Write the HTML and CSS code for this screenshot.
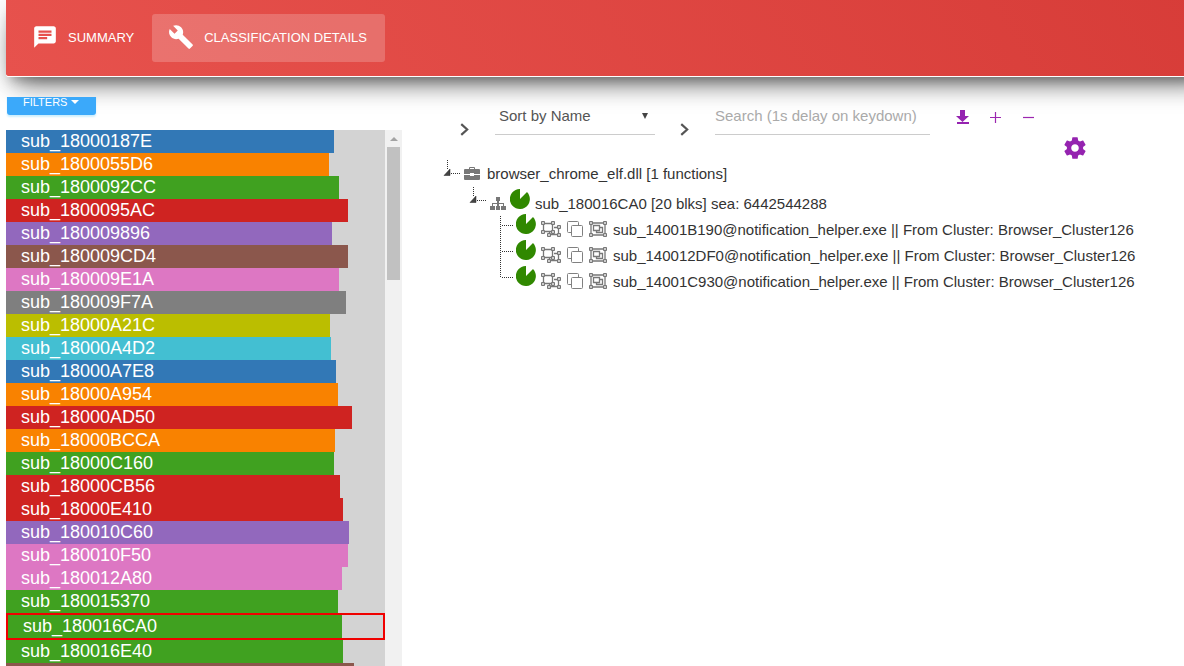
FILE: index.html
```html
<!DOCTYPE html>
<html lang="en">
<head>
<meta charset="utf-8">
<title>Classification Details</title>
<link rel="stylesheet" href="styles.css">
</head>
<body>
<svg class="defs" aria-hidden="true">
  <symbol id="pie" viewBox="0 0 20 20"><path fill="#308800" d="M10 10V0A10 10 0 1 0 17 3Z"/></symbol>
  <symbol id="ungroup" viewBox="0 0 20 16"><g fill="none" stroke="#777"><path stroke-width="1.300" d="M2.500 2.500h9v8h-9zM13 6.500h4.500v7h-9v-2.500"/><path fill="#ccc" d="M.5.5h3v3h-3zM10.500.5h3v3h-3zM.5 9.500h3v3h-3zM10.500 9.500h3v3h-3zM16.500 4.500h3v3h-3zM16.500 12.500h3v3h-3zM6.500 12.500h3v3h-3z"/></g></symbol>
  <symbol id="copy" viewBox="0 0 16 16"><g fill="#fff" stroke="#808080"><rect x=".5" y=".5" width="11" height="11" rx="1"/><rect x="4.500" y="4.500" width="11" height="11" rx="1"/></g></symbol>
  <symbol id="group" viewBox="0 0 18 16"><g fill="none" stroke="#777"><path stroke-width="1.300" d="M2 2h14v12H2z"/><path stroke-width="1.300" d="M4.500 4.500h6v5h-6zM11 6.500h2.500v5h-6v-2"/><path fill="#ccc" d="M.5.5h3v3h-3zM14.500.5h3v3h-3zM.5 12.500h3v3h-3zM14.500 12.500h3v3h-3z"/></g></symbol>
  <symbol id="chevron" viewBox="0 0 8 12"><path d="M1 1l5.500 5L1 11" fill="none" stroke="#555" stroke-width="2"/></symbol>
  <symbol id="expander" viewBox="0 0 18 28"><path d="M4.500 1v9M8 14.500h10" fill="none" stroke="#333" stroke-dasharray="1 1"/><path d="M1 16.500L7 10v6.500z" fill="#444" stroke="#222" stroke-width=".5"/></symbol>
</svg>

<header class="banner">
  <nav class="tabs">
    <a class="tab" href="#summary">
      <svg width="26" height="26" viewBox="0 0 24 24"><path fill="#fff" d="M20 2H4c-1.100 0-2 .9-2 2v18l4-4h14c1.100 0 2-.9 2-2V4c0-1.100-.9-2-2-2zM6 9h12v2H6V9zm8 5H6v-2h8v2zm4-6H6V6h12v2z"/></svg>
      SUMMARY
    </a>
    <a class="tab active" href="#details">
      <svg width="26" height="26" viewBox="0 0 24 24"><path fill="#fff" d="M22.700 19l-9.100-9.100c.9-2.300.4-5-1.500-6.900-2-2-5-2.400-7.400-1.300L9 6 6 9 1.600 4.700C.4 7.100.9 10.100 2.900 12.100c1.900 1.900 4.600 2.400 6.900 1.500l9.100 9.100c.4.4 1 .4 1.400 0l2.300-2.300c.5-.4.5-1.100.1-1.400z"/></svg>
      CLASSIFICATION DETAILS
    </a>
  </nav>
</header>

<main class="content">
  <aside class="sidebar">
    <div class="filter-bar"><button class="filters" type="button">FILTERS <span class="caret"></span></button></div>
    <div class="scroller">
      <ul class="functions">
        <li><div class="bar blue" style="width:86.5%">sub_18000187E</div></li>
        <li><div class="bar orange" style="width:85.2%">sub_1800055D6</div></li>
        <li><div class="bar green" style="width:87.9%">sub_1800092CC</div></li>
        <li><div class="bar red" style="width:90.2%">sub_1800095AC</div></li>
        <li><div class="bar purple" style="width:86%">sub_180009896</div></li>
        <li><div class="bar brown" style="width:90.2%">sub_180009CD4</div></li>
        <li><div class="bar pink" style="width:87.9%">sub_180009E1A</div></li>
        <li><div class="bar gray" style="width:89.7%">sub_180009F7A</div></li>
        <li><div class="bar olive" style="width:85.5%">sub_18000A21C</div></li>
        <li><div class="bar cyan" style="width:85.8%">sub_18000A4D2</div></li>
        <li><div class="bar blue" style="width:87.1%">sub_18000A7E8</div></li>
        <li><div class="bar orange" style="width:87.6%">sub_18000A954</div></li>
        <li><div class="bar red" style="width:91.3%">sub_18000AD50</div></li>
        <li><div class="bar orange" style="width:86.8%">sub_18000BCCA</div></li>
        <li><div class="bar green" style="width:86.5%">sub_18000C160</div></li>
        <li><div class="bar red" style="width:88.1%">sub_18000CB56</div></li>
        <li><div class="bar red" style="width:88.9%">sub_18000E410</div></li>
        <li><div class="bar purple" style="width:90.5%">sub_180010C60</div></li>
        <li><div class="bar pink" style="width:90.2%">sub_180010F50</div></li>
        <li><div class="bar pink" style="width:88.7%">sub_180012A80</div></li>
        <li><div class="bar green" style="width:87.6%">sub_180015370</div></li>
        <li class="selected"><div class="bar green" style="width:89.1%">sub_180016CA0</div></li>
        <li><div class="bar green" style="width:88.9%">sub_180016E40</div></li>
        <li><div class="bar brown" style="width:91.8%"></div></li>
      </ul>
      <div class="scrollbar"><span class="arrow"></span><span class="thumb"></span></div>
    </div>
  </aside>

  <section class="details">
    <div class="toolbar">
      <button class="step" type="button" aria-label="Expand sorting"><svg width="9" height="13"><use href="#chevron"/></svg></button>
      <div class="sort">
        <select aria-label="Sort"><option>Sort by Name</option></select>
        <span class="sort-arrow"></span>
      </div>
      <button class="step" type="button" aria-label="Expand search"><svg width="9" height="13"><use href="#chevron"/></svg></button>
      <input class="search" type="text" aria-label="Search" placeholder="Search (1s delay on keydown)">
      <div class="actions">
        <button type="button" aria-label="Download"><svg width="13" height="15" viewBox="0 0 13 15"><path fill="#9523b0" d="M4 0h5v6h4l-6.500 6L0 6h4zM1 12h12v2H1z"/></svg></button>
        <button type="button" aria-label="Expand all"><svg width="13" height="13" viewBox="0 0 13 13"><path stroke="#9c27b0" stroke-width="1.200" d="M1 6.500h11M6.500 1v11"/></svg></button>
        <button type="button" aria-label="Collapse all"><svg width="13" height="13" viewBox="0 0 13 13"><path stroke="#9c27b0" stroke-width="1.200" d="M1 6.500h11"/></svg></button>
      </div>
      <button class="settings" type="button" aria-label="Settings"><svg width="26" height="26" viewBox="0 0 24 24"><path fill="#9523b0" d="M19.430 12.980c.04-.32.07-.64.07-.98s-.03-.66-.07-.98l2.110-1.650c.19-.15.24-.42.12-.64l-2-3.460c-.12-.22-.39-.3-.61-.22l-2.490 1c-.52-.4-1.080-.73-1.690-.98l-.38-2.650C14.460 2.180 14.250 2 14 2h-4c-.25 0-.46.18-.49.42l-.38 2.650c-.61.25-1.170.59-1.690.98l-2.490-1c-.23-.09-.49 0-.61.22l-2 3.460c-.13.22-.07.49.12.64l2.110 1.650c-.04.32-.07.65-.07.98s.03.66.07.98l-2.110 1.650c-.19.15-.24.42-.12.64l2 3.460c.12.22.39.3.61.22l2.490-1c.52.4 1.080.73 1.690.98l.38 2.650c.03.24.24.42.49.42h4c.25 0 .46-.18.49-.42l.38-2.650c.61-.25 1.170-.59 1.690-.98l2.490 1c.23.09.49 0 .61-.22l2-3.460c.12-.22.07-.49-.12-.64l-2.110-1.650zM12 15.500c-1.930 0-3.500-1.570-3.500-3.500s1.570-3.500 3.500-3.500 3.500 1.570 3.500 3.500-1.570 3.500-3.500 3.500z"/></svg></button>
    </div>

    <ul class="tree">
      <li>
        <div class="node root">
          <svg width="18" height="28"><use href="#expander"/></svg>
          <svg class="case" width="16" height="13" viewBox="0 0 16 13"><path fill="#777" d="M5 2V1q0-1 1-1h4q1 0 1 1v1h4q1 0 1 1v4h-6V6H6v1H0V3q0-1 1-1zm1 0h4V1H6zM0 8h6v1h4V8h6v4q0 1-1 1H1q-1 0-1-1z"/></svg>
          <span>browser_chrome_elf.dll [1 functions]</span>
        </div>
        <ul>
          <li>
            <div class="node branch">
              <svg class="toggle" width="18" height="28"><use href="#expander"/></svg>
              <svg class="map" width="16" height="13" viewBox="0 0 16 13"><path fill="#777" d="M6 0h4v4H9v2h5v3h2v4h-5V9h2V7H9v2h1v4H6V9h1V7H3v2h2v4H0V9h2V6h5V4H6z"/></svg>
              <svg class="pie" width="20" height="20"><use href="#pie"/></svg>
              <span>sub_180016CA0 [20 blks] sea: 6442544288</span>
            </div>
            <ul>
              <li class="node leaf">
                <svg class="link" width="15" height="26"><path d="M1.500 0v26M3 9.500h12"/></svg>
                <svg class="pie" width="20" height="20"><use href="#pie"/></svg>
                <svg width="20" height="16"><use href="#ungroup"/></svg>
                <svg width="16" height="16"><use href="#copy"/></svg>
                <svg width="18" height="16"><use href="#group"/></svg>
                <span>sub_14001B190@notification_helper.exe || From Cluster: Browser_Cluster126</span>
              </li>
              <li class="node leaf">
                <svg class="link" width="15" height="26"><path d="M1.500 0v26M3 9.500h12"/></svg>
                <svg class="pie" width="20" height="20"><use href="#pie"/></svg>
                <svg width="20" height="16"><use href="#ungroup"/></svg>
                <svg width="16" height="16"><use href="#copy"/></svg>
                <svg width="18" height="16"><use href="#group"/></svg>
                <span>sub_140012DF0@notification_helper.exe || From Cluster: Browser_Cluster126</span>
              </li>
              <li class="node leaf">
                <svg class="link" width="15" height="26"><path d="M1.500 0v10M3 9.500h12"/></svg>
                <svg class="pie" width="20" height="20"><use href="#pie"/></svg>
                <svg width="20" height="16"><use href="#ungroup"/></svg>
                <svg width="16" height="16"><use href="#copy"/></svg>
                <svg width="18" height="16"><use href="#group"/></svg>
                <span>sub_14001C930@notification_helper.exe || From Cluster: Browser_Cluster126</span>
              </li>
            </ul>
          </li>
        </ul>
      </li>
    </ul>
  </section>
</main>
</body>
</html>
```
FILE: styles.css
```css
* { box-sizing: border-box; }

body {
  margin: 0;
  height: 100vh;
  display: flex;
  flex-direction: column;
  overflow: hidden;
  background: #fff;
  color: #333;
  font-family: "Liberation Sans", Arial, sans-serif;
  font-size: 15px;
}

ul { list-style: none; margin: 0; padding: 0; }
svg { display: block; flex: none; }
button { padding: 0; border: 0; background: none; font: inherit; cursor: pointer; }
.defs { position: absolute; width: 0; height: 0; }

.banner {
  flex: none;
  margin: 0 -32px 0 6px;
  padding: 14px 12px;
  border-bottom: 1px solid #fff;
  border-radius: 0 0 3px 3px;
  background: linear-gradient(60deg, #e7524d, #d73c38) padding-box;
  box-shadow: 0 16px 26px -10px rgba(0, 0, 0, .56), 0 4px 25px 0 rgba(0, 0, 0, .12), 0 8px 10px -5px rgba(0, 0, 0, .2);
}
.tabs { display: flex; gap: 2px; }
.tab {
  display: flex;
  align-items: center;
  gap: 10px;
  height: 48px;
  padding: 0 16px 2px 14px;
  border-radius: 3px;
  color: #fff;
  font-size: 13px;
  text-decoration: none;
}
.tab.active { padding: 0 18px 2px 16px; background: rgba(255, 255, 255, .2); }

.content {
  flex: 1;
  min-height: 0;
  display: grid;
  grid-template-columns: 396fr 782fr;
  grid-template-rows: minmax(0, 1fr);
  padding: 20px 0 0 6px;
}
.sidebar { display: flex; flex-direction: column; min-height: 0; }
.filter-bar {
  flex: none;
  display: flex;
  align-items: flex-end;
  height: 33px;
  padding: 0 1px 15px;
  overflow: hidden;
}
.filters {
  display: flex;
  align-items: center;
  gap: 4px;
  height: 27px;
  padding: 0 17px 0 16px;
  border-radius: 3px;
  background: #3ba9fa;
  box-shadow: 0 2px 2px rgba(3, 169, 244, .2);
  color: #fff;
  font-size: 11px;
}
.caret { border: 4px solid transparent; border-top-color: #fff; border-bottom: 0; }

.scroller { flex: 1; min-height: 0; display: flex; overflow: hidden; }
.functions { flex: 1; background: #d3d3d3; }
.bar { height: 23px; padding-left: 15px; color: #fff; font-size: 18px; line-height: 22px; }
.selected { border: 2px solid #f00000; }
.blue { background: #3278b6; }
.orange { background: #f98200; }
.green { background: #40a120; }
.red { background: #cf2321; }
.purple { background: #9268bd; }
.brown { background: #8b574c; }
.pink { background: #dd77c3; }
.gray { background: #7f7f7f; }
.olive { background: #bbbe00; }
.cyan { background: #43bfd2; }

.scrollbar {
  display: flex;
  flex-direction: column;
  align-items: center;
  width: 17px;
  background: #f1f1f1;
}
.arrow { margin: 7px 0 6px; border: 4px solid transparent; border-bottom-color: #a3a3a3; border-top: 0; }
.thumb { width: 13px; height: 133px; background: #c1c1c1; }

.details { min-width: 0; }
.toolbar { display: flex; align-items: flex-start; height: 62px; padding-left: 58px; }
.step { width: 9px; padding-top: 26px; margin-right: 26px; }
.sort { position: relative; flex: 0 1 160px; margin-right: 25px; }
.sort select {
  appearance: none;
  width: 100%;
  height: 38px;
  padding: 0 4px;
  border: 0;
  border-bottom: 1px solid #ccc;
  border-radius: 0;
  background: none;
  color: #555;
  font: inherit;
}
.sort-arrow {
  position: absolute;
  top: 16px;
  right: 7px;
  border: 3px solid transparent;
  border-top: 6px solid #444;
  border-bottom: 0;
  pointer-events: none;
}
.search {
  flex: 0 1 215px;
  min-width: 0;
  height: 38px;
  padding: 0;
  border: 0;
  border-bottom: 1px solid #ccc;
  background: none;
  font: inherit;
}
.search::placeholder { color: #aaa; opacity: 1; }
.actions { display: flex; align-items: center; gap: 20px; height: 41px; padding: 0 27px 0 26px; }
.settings { align-self: flex-end; margin-bottom: -2px; }

.tree { padding-left: 41px; }
.node { display: flex; align-items: center; white-space: nowrap; }
.root { height: 28px; }
.branch { height: 29px; padding: 3px 0 0 26px; }
.leaf { height: 26px; padding-left: 56px; }
.case { margin: 0 7px 0 3px; }
.map { margin: 0 4px 0 3px; }
.toggle { margin-bottom: 6px; }
.branch .pie { margin: 0 5px 9px 0; }
.leaf { gap: 6px; }
.leaf .pie { margin: 0 -1px 11px -4px; }
.link path { fill: none; stroke: #333; stroke-dasharray: 1 1; }
```
